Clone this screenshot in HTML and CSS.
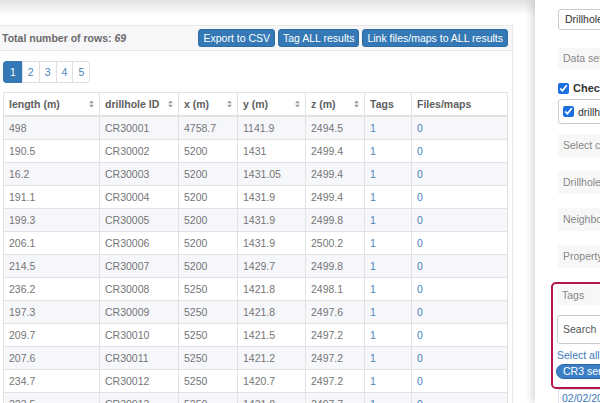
FILE: index.html
```html
<!DOCTYPE html>
<html>
<head>
<meta charset="utf-8">
<link rel="stylesheet" href="styles.css">
</head>
<body>
<div class="app">
  <main class="main">
    <div class="topshade"></div>
    <section class="card">
      <header class="card-head">
        <span class="total">Total number of rows: <em>69</em></span>
        <div class="actions">
          <button class="btn">Export to CSV</button>
          <button class="btn">Tag ALL results</button>
          <button class="btn">Link files/maps to ALL results</button>
        </div>
      </header>
      <div class="card-body">
        <ul class="pager">
          <li><a class="active first">1</a></li>
          <li><a>2</a></li>
          <li><a>3</a></li>
          <li><a>4</a></li>
          <li><a class="last">5</a></li>
        </ul>
        <table class="grid">
          <colgroup>
            <col class="c-len"><col class="c-id"><col class="c-x"><col class="c-y"><col class="c-z"><col class="c-tags"><col class="c-files">
          </colgroup>
          <thead>
            <tr>
              <th>length (m)<svg class="sort" viewBox="0 0 6 10"><polygon points="0,4 3,0.5 6,4"/><polygon points="0,6 3,9.5 6,6"/></svg></th>
              <th>drillhole ID<svg class="sort" viewBox="0 0 6 10"><polygon points="0,4 3,0.5 6,4"/><polygon points="0,6 3,9.5 6,6"/></svg></th>
              <th>x (m)<svg class="sort" viewBox="0 0 6 10"><polygon points="0,4 3,0.5 6,4"/><polygon points="0,6 3,9.5 6,6"/></svg></th>
              <th>y (m)<svg class="sort" viewBox="0 0 6 10"><polygon points="0,4 3,0.5 6,4"/><polygon points="0,6 3,9.5 6,6"/></svg></th>
              <th>z (m)<svg class="sort" viewBox="0 0 6 10"><polygon points="0,4 3,0.5 6,4"/><polygon points="0,6 3,9.5 6,6"/></svg></th>
              <th>Tags</th>
              <th>Files/maps</th>
            </tr>
          </thead>
          <tbody>
            <tr><td>498</td><td>CR30001</td><td>4758.7</td><td>1141.9</td><td>2494.5</td><td class="lnk">1</td><td class="lnk">0</td></tr>
            <tr><td>190.5</td><td>CR30002</td><td>5200</td><td>1431</td><td>2499.4</td><td class="lnk">1</td><td class="lnk">0</td></tr>
            <tr><td>16.2</td><td>CR30003</td><td>5200</td><td>1431.05</td><td>2499.4</td><td class="lnk">1</td><td class="lnk">0</td></tr>
            <tr><td>191.1</td><td>CR30004</td><td>5200</td><td>1431.9</td><td>2499.4</td><td class="lnk">1</td><td class="lnk">0</td></tr>
            <tr><td>199.3</td><td>CR30005</td><td>5200</td><td>1431.9</td><td>2499.8</td><td class="lnk">1</td><td class="lnk">0</td></tr>
            <tr><td>206.1</td><td>CR30006</td><td>5200</td><td>1431.9</td><td>2500.2</td><td class="lnk">1</td><td class="lnk">0</td></tr>
            <tr><td>214.5</td><td>CR30007</td><td>5200</td><td>1429.7</td><td>2499.8</td><td class="lnk">1</td><td class="lnk">0</td></tr>
            <tr><td>236.2</td><td>CR30008</td><td>5250</td><td>1421.8</td><td>2498.1</td><td class="lnk">1</td><td class="lnk">0</td></tr>
            <tr><td>197.3</td><td>CR30009</td><td>5250</td><td>1421.8</td><td>2497.6</td><td class="lnk">1</td><td class="lnk">0</td></tr>
            <tr><td>209.7</td><td>CR30010</td><td>5250</td><td>1421.5</td><td>2497.2</td><td class="lnk">1</td><td class="lnk">0</td></tr>
            <tr><td>207.6</td><td>CR30011</td><td>5250</td><td>1421.2</td><td>2497.2</td><td class="lnk">1</td><td class="lnk">0</td></tr>
            <tr><td>234.7</td><td>CR30012</td><td>5250</td><td>1420.7</td><td>2497.2</td><td class="lnk">1</td><td class="lnk">0</td></tr>
            <tr><td>223.5</td><td>CR30013</td><td>5250</td><td>1421.8</td><td>2497.7</td><td class="lnk">1</td><td class="lnk">0</td></tr>
          </tbody>
        </table>
      </div>
    </section>
  </main>
  <aside class="side">
    <div class="select">Drillholes</div>
    <div class="label-box first-label">Data sets</div>
    <label class="check-row"><input type="checkbox" checked><span>Check all</span></label>
    <label class="check-box"><input type="checkbox" checked><span>drillholes</span></label>
    <div class="label-box section">Select columns</div>
    <div class="label-box section">Drillhole ID</div>
    <div class="label-box section">Neighborhood</div>
    <div class="label-box section">Property</div>
    <div class="tags">
      <div class="label-box tags-label">Tags</div>
      <div class="search">Search</div>
      <a class="select-all">Select all</a>
      <div class="pill-row"><span class="pill">CR3 series</span></div>
    </div>
    <div class="date">02/02/2021</div>
  </aside>
</div>
</body>
</html>
```

FILE: styles.css
```css
html, body {
  margin: 0;
  padding: 0;
}
body {
  width: 600px;
  height: 403px;
  overflow: hidden;
  background: #fff;
  font-family: "Liberation Sans", Arial, sans-serif;
  font-size: 10.5px;
  color: #555;
}
.app {
  display: flex;
  width: 600px;
  height: 403px;
  overflow: hidden;
}
.main {
  flex: none;
  width: 535px;
}
.topshade {
  height: 16px;
  background: linear-gradient(#e2e2e2, #fafafa 80%, #fff);
}
.card {
  margin-top: 9px;
  width: 512px;
  border-top: 1px solid #e8e8e8;
  border-right: 1px solid #e8e8e8;
}
.card-head {
  display: flex;
  align-items: center;
  justify-content: space-between;
  height: 24px;
  padding: 0 4px 0 2px;
  background: #f7f7f9;
  border-bottom: 1px solid #e6e6e6;
}
.total {
  font-weight: bold;
  color: #6a6a6a;
}
.total em {
  font-style: italic;
}
.actions {
  display: flex;
  gap: 3px;
}
.btn {
  font-family: "Liberation Sans", Arial, sans-serif;
  font-size: 10.5px;
  color: #fff;
  background: #3479b5;
  border: 1px solid #2e6da4;
  border-radius: 3px;
  padding: 0 4px;
  height: 18px;
  line-height: 16px;
  margin: 0;
}
.card-body {
  padding: 10px 5px 0 3px;
}
.pager {
  display: flex;
  list-style: none;
  margin: 0 0 9px 0;
  padding: 0 0 0 1px;
}
.pager a {
  display: block;
  padding: 0 5px;
  line-height: 20px;
  border: 1px solid #e0e0e0;
  margin-left: -1px;
  color: #4a84bd;
  background: #fff;
}
.pager a.active {
  background: #3479b5;
  border-color: #3479b5;
  color: #fff;
  padding: 0 6px;
}
.pager a.first {
  border-radius: 3px 0 0 3px;
}
.pager a.last {
  border-radius: 0 3px 3px 0;
}
.grid {
  width: 504px;
  table-layout: fixed;
  border-collapse: collapse;
  border: 1px solid #ddd;
}
.c-len { width: 96px; }
.c-id { width: 79px; }
.c-x { width: 59px; }
.c-y { width: 68px; }
.c-z { width: 59px; }
.c-tags { width: 47px; }
.c-files { width: 96px; }
.grid th, .grid td {
  padding: 4px 5px;
  line-height: 14px;
  border: 1px solid #e2e2e2;
  text-align: left;
  white-space: nowrap;
  overflow: hidden;
}
.grid th {
  font-weight: bold;
  color: #606060;
  border-bottom: 2px solid #e2e2e2;
}
.grid td {
  color: #757575;
}
.grid tbody tr:nth-child(odd) td {
  background: #f6f7fa;
}
.grid td.lnk {
  color: #4a84bd;
}
.sort {
  float: right;
  width: 5px;
  height: 8px;
  margin-top: 3px;
  fill: #9a9a9a;
}
.side {
  flex: none;
  width: 200px;
  position: relative;
  z-index: 1;
  background: #fff;
  box-shadow: -3px 0 7px rgba(0, 0, 0, 0.16);
  padding: 9px 0 0 23px;
  white-space: nowrap;
  overflow: hidden;
}
.select {
  height: 19px;
  line-height: 19px;
  border: 1px solid #ccc;
  border-radius: 3px;
  padding-left: 6px;
  color: #333;
}
.label-box {
  background: #f7f7f7;
  color: #888;
  padding: 0 5px;
  height: 23px;
  line-height: 23px;
}
.first-label {
  margin-top: 18px;
  height: 21px;
  line-height: 21px;
}
.check-row {
  display: flex;
  align-items: center;
  margin-top: 13px;
  height: 12px;
  font-weight: bold;
  font-size: 11px;
  color: #333;
}
.check-row input, .check-box input {
  width: 11px;
  height: 11px;
  margin: 0 4px 0 0;
  accent-color: #1c6fe0;
}
.check-box {
  display: flex;
  align-items: center;
  margin-top: 5px;
  height: 23px;
  border: 1px solid #ccc;
  border-radius: 3px;
  padding-left: 4px;
  color: #333;
}
.section {
  margin-top: 14px;
}
.check-box + .section {
  margin-top: 10px;
}
.tags {
  margin-top: 14px;
  margin-left: -7px;
  border: 2px solid #b3174c;
  border-radius: 5px;
  padding: 1px 4px 8px 4px;
}
.tags-label {
  height: 20px;
  line-height: 20px;
}
.search {
  margin-top: 10px;
  height: 27px;
  line-height: 27px;
  border: 1px solid #ccc;
  border-radius: 3px;
  padding-left: 5px;
  color: #555;
}
.select-all {
  display: block;
  margin-top: 4px;
  line-height: 14px;
  color: #3a78b8;
}
.pill-row {
  margin-top: 2px;
  margin-left: -1px;
}
.pill {
  display: inline-block;
  height: 13px;
  line-height: 13px;
  padding: 0 6px;
  background: #3c7fc6;
  border: 1px solid #2b62a3;
  border-radius: 8px;
  color: #fff;
}
.date {
  margin-top: 0;
  border: 1px solid #dde;
  padding: 2px 3px;
  color: #3a78b8;
}
```
